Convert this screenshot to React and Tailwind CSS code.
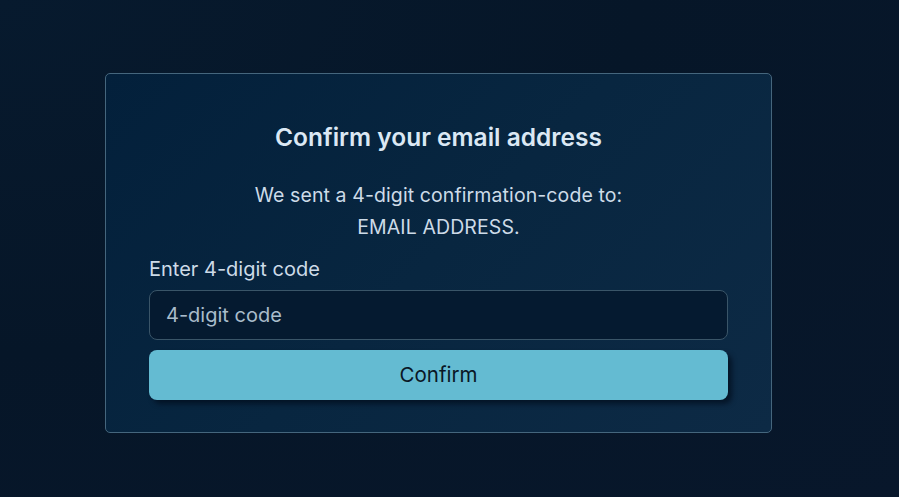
export default function App() {
  return (
    <div
      className="min-h-screen w-full bg-[radial-gradient(ellipse_at_top_left,#071a2e_0%,#061628_50%,#08172b_100%)] pt-[73px] pl-[105px]"
      style={{ fontFamily: 'Inter, "Noto Sans", sans-serif' }}
    >
      <div className="w-[667px] h-[360px] rounded-[5px] border border-[#45667d] bg-[linear-gradient(135deg,#03203b_0%,#082640_50%,#0d2a45_100%)] px-[43px] pt-[45px]">
        <h1 className="text-center text-[24.5px] font-semibold text-[#dbe8f4] leading-[36px]">
          Confirm your email address
        </h1>
        <p className="mt-[24px] text-center text-[19.5px] leading-[32px] text-[#cddbe8] tracking-[0.1px]">
          We sent a 4-digit confirmation-code to:
          <br />
          EMAIL ADDRESS.
        </p>
        <label className="mt-[11px] block text-[20px] leading-[30px] text-[#cddbe8]">
          Enter 4-digit code
        </label>
        <input
          className="mt-[6px] block h-[50px] w-full rounded-[8px] border border-[#3a5568] bg-[#051a30] px-[16px] text-[20px] text-[#cddbe8] placeholder:text-[#a9bccb] outline-none"
          placeholder="4-digit code"
          style={{ fontFamily: 'Inter, "Noto Sans", sans-serif' }}
        />
        <button
          className="mt-[10px] block h-[50px] w-full rounded-[8px] bg-[#64bbd2] text-[20.5px] text-[#0a1726] shadow-[4px_4px_5px_rgba(0,10,25,0.65)]"
          style={{ fontFamily: 'Inter, "Noto Sans", sans-serif' }}
        >
          Confirm
        </button>
      </div>
    </div>
  );
}
